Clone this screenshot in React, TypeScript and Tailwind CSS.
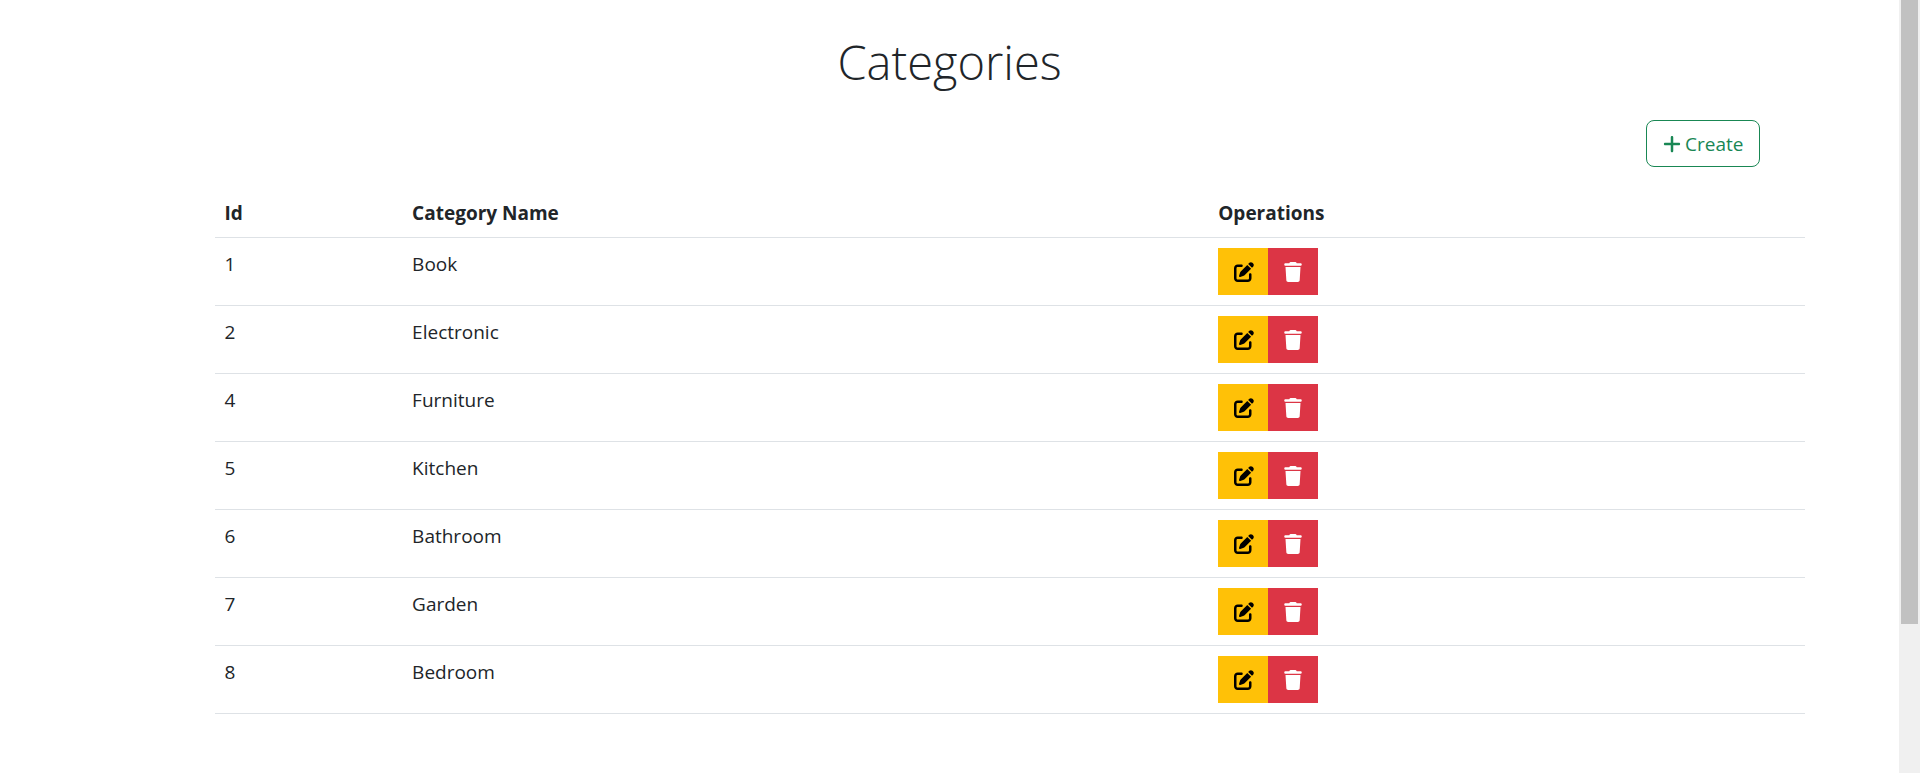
import { FaPenToSquare, FaPlus, FaTrash } from "react-icons/fa6";

interface Category {
  id: number;
  name: string;
}

const categories: Category[] = [
  { id: 1, name: "Book" },
  { id: 2, name: "Electronic" },
  { id: 4, name: "Furniture" },
  { id: 5, name: "Kitchen" },
  { id: 6, name: "Bathroom" },
  { id: 7, name: "Garden" },
  { id: 8, name: "Bedroom" },
];

function CategoryRow({ category }: { category: Category }) {
  return (
    <tr className="border-b border-[#dee2e6] align-top">
      <td className="p-[10px]">{category.id}</td>
      <td className="p-[10px]">{category.name}</td>
      <td className="p-[10px]">
        <div className="flex">
          <button
            type="button"
            aria-label={`Edit ${category.name}`}
            className="flex h-[47px] w-[50px] items-center bg-[#ffc107] pl-4 text-xl text-black"
          >
            <FaPenToSquare />
          </button>
          <button
            type="button"
            aria-label={`Delete ${category.name}`}
            className="flex h-[47px] w-[50px] items-center justify-center bg-[#dc3545] text-xl text-white"
          >
            <FaTrash />
          </button>
        </div>
      </td>
    </tr>
  );
}

function ScrollTrack() {
  return (
    <div aria-hidden="true" className="sticky top-0 h-screen w-[21px] shrink-0 bg-[#f0f0f0] px-[2px]">
      <div className="h-[80.7%] bg-[#c1c1c1]" />
    </div>
  );
}

export default function App() {
  return (
    <div className="flex min-h-screen bg-white font-['Open_Sans','Noto_Sans',sans-serif] text-[19px] leading-8 text-[#212529]">
      <main className="min-w-0 flex-1">
        <div className="mx-auto max-w-[1650px] px-[15px] pt-8">
          <h1 className="text-center text-[47px] leading-[60px] font-light">Categories</h1>
          <div className="mt-7 flex justify-end">
            <button
              type="button"
              className="flex h-[47px] items-center gap-[3px] rounded-lg border border-[#198754] px-[15px] text-[#198754]"
            >
              <FaPlus className="text-xl" />
              Create
            </button>
          </div>
          <div className="mt-5 -mr-[45px] ml-[75px]">
            <table className="w-full border-collapse text-left">
              <thead>
                <tr className="border-b border-[#dee2e6]">
                  <th className="w-[11.8%] px-[10px] pt-[10px] pb-2">Id</th>
                  <th className="w-[50.7%] px-[10px] pt-[10px] pb-2">Category Name</th>
                  <th className="px-[10px] pt-[10px] pb-2">Operations</th>
                </tr>
              </thead>
              <tbody>
                {categories.map((category) => (
                  <CategoryRow key={category.id} category={category} />
                ))}
              </tbody>
            </table>
          </div>
        </div>
      </main>
      <ScrollTrack />
    </div>
  );
}
